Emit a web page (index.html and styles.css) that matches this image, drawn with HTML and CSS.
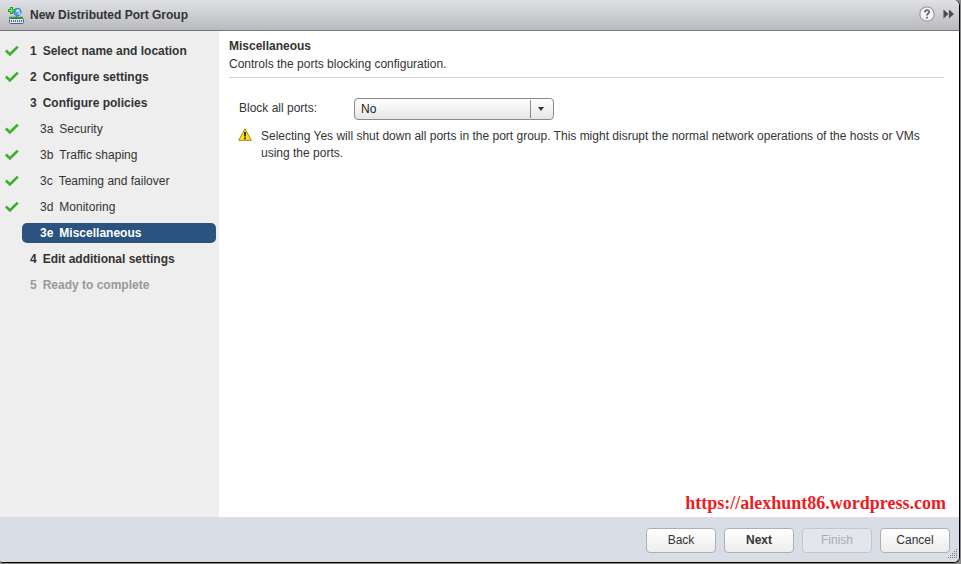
FILE: index.html
```html
<!DOCTYPE html>
<html lang="en">
<head>
<meta charset="utf-8">
<title>New Distributed Port Group</title>
<link rel="stylesheet" href="styles.css">
</head>
<body>
<svg class="symbols" aria-hidden="true">
  <symbol id="check" viewBox="0 0 14 12"><path d="M.9 5.500 4.900 9.400 12.800 1.600" fill="none" stroke="#3bb02c" stroke-width="2.700"/></symbol>
</svg>
<div class="dialog">
  <header class="titlebar">
    <svg class="title-icon" viewBox="0 0 16 17" aria-hidden="true">
      <path d="M1 10.500h14M8.500 9v3" stroke="#2f9e35" stroke-width="1.500"/>
      <circle cx="9.500" cy="5" r="3.700" fill="#5ba3ea" stroke="#3477c4"/>
      <path d="M8 3.500 10 2l2 1-1 2H8zM10 6l2-1 1 2-2 1z" fill="#b9e4fb"/>
      <path d="M3.500 0v7M0 3.500h7" stroke="#22a42c" stroke-width="3"/>
      <path d="M3.500 1v5M1 3.500h5" stroke="#7cf060" stroke-width="1"/>
      <rect x="1.500" y="11.500" width="14" height="5" rx="1" fill="#dce9f0" stroke="#506674"/>
      <path d="M3 14h11" stroke="#263f4c" stroke-width="1.500" stroke-dasharray="1 1"/>
    </svg>
    <h1>New Distributed Port Group</h1>
    <button class="tool help" type="button" aria-label="Help">
      <svg viewBox="0 0 16 16"><circle cx="8" cy="8" r="7.200" fill="#f4f4f4" stroke="#a0a0a0" stroke-width="1.300"/><path d="M5.800 6.200c.1-3 4.700-2.700 4.500-.2C10.200 7.500 8 7.600 8 9.600M8 10.800v1.700" fill="none" stroke="#666" stroke-width="1.700"/></svg>
    </button>
    <button class="tool more" type="button" aria-label="Expand">
      <svg viewBox="0 0 12 10"><path d="M.5 0 6 5 .5 10zM6.500 0 12 5l-5.500 5z" fill="#4c4c4c"/></svg>
    </button>
  </header>
  <div class="body">
    <nav class="sidebar" aria-label="Steps">
      <ol class="steps">
        <li><svg class="tick"><use href="#check"/></svg><a class="step" href="#"><span>1</span><span>Select name and location</span></a></li>
        <li><svg class="tick"><use href="#check"/></svg><a class="step" href="#"><span>2</span><span>Configure settings</span></a></li>
        <li><a class="step" href="#"><span>3</span><span>Configure policies</span></a></li>
        <li><svg class="tick"><use href="#check"/></svg><a class="step sub" href="#"><span>3a</span><span>Security</span></a></li>
        <li><svg class="tick"><use href="#check"/></svg><a class="step sub" href="#"><span>3b</span><span>Traffic shaping</span></a></li>
        <li><svg class="tick"><use href="#check"/></svg><a class="step sub" href="#"><span>3c</span><span>Teaming and failover</span></a></li>
        <li><svg class="tick"><use href="#check"/></svg><a class="step sub" href="#"><span>3d</span><span>Monitoring</span></a></li>
        <li><a class="step sub current" href="#" aria-current="step"><span>3e</span><span>Miscellaneous</span></a></li>
        <li><a class="step" href="#"><span>4</span><span>Edit additional settings</span></a></li>
        <li><a class="step pending" aria-disabled="true"><span>5</span><span>Ready to complete</span></a></li>
      </ol>
    </nav>
    <main class="content">
      <div class="heading">
        <h2>Miscellaneous</h2>
        <p>Controls the ports blocking configuration.</p>
      </div>
      <div class="field">
        <label for="block">Block all ports:</label>
        <div class="combo">
          <select id="block"><option>No</option><option>Yes</option></select>
        </div>
      </div>
      <div class="warning">
        <svg viewBox="0 0 14 13" aria-hidden="true"><path d="M7 .8 13.300 12.300H.7z" fill="#fce51c" stroke="#a5861b" stroke-linejoin="round"/><path d="M7 4v4.500M7 9.500v1.700" stroke="#222" stroke-width="1.800"/></svg>
        <p>Selecting Yes will shut down all ports in the port group. This might disrupt the normal network operations of the hosts or VMs using the ports.</p>
      </div>
      <p class="watermark">https://alexhunt86.wordpress.com</p>
    </main>
  </div>
  <footer class="actions">
    <button type="button">Back</button>
    <button type="button" class="primary">Next</button>
    <button type="button" disabled>Finish</button>
    <button type="button">Cancel</button>
    <svg class="grip" viewBox="0 0 10 10" aria-hidden="true"><path d="M8 .5h1M6 2.500h4M4 4.500h6M2 6.500h8M0 8.500h10" stroke="#747a82" stroke-dasharray="1 1"/></svg>
  </footer>
</div>
</body>
</html>
```

FILE: styles.css
```css
* { box-sizing: border-box; }

body {
  margin: 0;
  background: #8a8a8a;
  color: #333;
  font: 12px/17px "Liberation Sans", Arial, sans-serif;
}

h1, h2, p, ol { margin: 0; padding: 0; font-size: 12px; }
button, select { font: inherit; color: inherit; }

.symbols { position: absolute; width: 0; height: 0; }

.dialog {
  display: flex;
  flex-direction: column;
  height: calc(100vh - 1px);
  margin-right: 1px;
  border: solid #000;
  border-width: 0 1px 1px 0;
  border-radius: 0 6px 6px 3px;
  overflow: hidden;
  background: #fff;
}

.titlebar {
  display: flex;
  align-items: center;
  height: 31px;
  padding: 0 5px 0 8px;
  border-bottom: 1px solid #777;
  background: linear-gradient(#e0e1e5, #b9babe);
}

.title-icon { width: 16px; height: 17px; margin-right: 6px; }
.titlebar h1 { flex: 1; }

.tool {
  display: flex;
  padding: 0 0 2px;
  border: 0;
  background: none;
}

.help { margin-right: 8px; }
.help svg { width: 16px; height: 16px; }
.more svg { width: 11px; height: 10px; }

.body { display: flex; flex: 1; min-height: 0; }

.sidebar {
  flex: none;
  width: 219px;
  padding: 10px 3px 0 5px;
  background: #eee;
}

.steps { display: grid; gap: 6px; list-style: none; }
.steps li { display: flex; align-items: center; height: 20px; }
.tick { width: 14px; height: 12px; margin-right: 3px; }

.step {
  display: flex;
  flex: 1;
  gap: 6px;
  padding-left: 8px;
  border-radius: 5px;
  color: #333;
  font-weight: bold;
  line-height: 20px;
  text-decoration: none;
}

.steps li:not(:has(.tick)) { padding-left: 17px; }
.sub { padding-left: 18px; font-weight: normal; }
.current { background: #2a537f; color: #fff; font-weight: bold; }
.pending { color: #999; }

.content {
  display: flex;
  flex: 1;
  flex-direction: column;
  min-width: 0;
  padding: 6px 13px 4px 10px;
}

.heading {
  margin-right: 2px;
  padding-bottom: 4px;
  border-bottom: 1px solid #d0d0d0;
  line-height: 18px;
}

.field {
  display: flex;
  align-items: center;
  margin-top: 20px;
  padding-left: 10px;
}

.field label { width: 115px; padding-bottom: 2px; }

.combo { position: relative; width: 200px; }

.combo select {
  display: block;
  width: 100%;
  height: 22px;
  padding: 0 30px 0 6px;
  border: 1px solid #888;
  border-radius: 4px;
  appearance: none;
  background: linear-gradient(#fff, #e6e6e6);
  color: #222;
}

.combo::before {
  content: "";
  position: absolute;
  top: 2px;
  right: 23px;
  bottom: 2px;
  border-left: 1px solid #888;
}

.combo::after {
  content: "";
  position: absolute;
  top: 9px;
  right: 10px;
  border: solid transparent;
  border-width: 4px 3px 0;
  border-top-color: #333;
}

.warning { display: flex; gap: 9px; margin-top: 8px; padding-left: 9px; }
.warning svg { flex: none; width: 14px; height: 13px; }

.watermark {
  margin-top: auto;
  color: #ed1c24;
  font: bold 18px/19px "Liberation Serif", "Times New Roman", serif;
  text-align: right;
}

.actions {
  position: relative;
  display: flex;
  justify-content: flex-end;
  gap: 8px;
  padding: 11px 9px 9px;
  background: #d9dee6;
}

.actions button {
  width: 70px;
  height: 25px;
  padding: 0;
  border: 1px solid #adb0b3;
  border-radius: 4px;
  background: linear-gradient(#fff, #ededed);
}

.actions .primary { font-weight: bold; }
.actions button:disabled { border-color: #c2c7cb; background: #e3e7eb; color: #a8acb0; }

.grip { position: absolute; right: 1px; bottom: 3px; width: 10px; height: 10px; }
```
